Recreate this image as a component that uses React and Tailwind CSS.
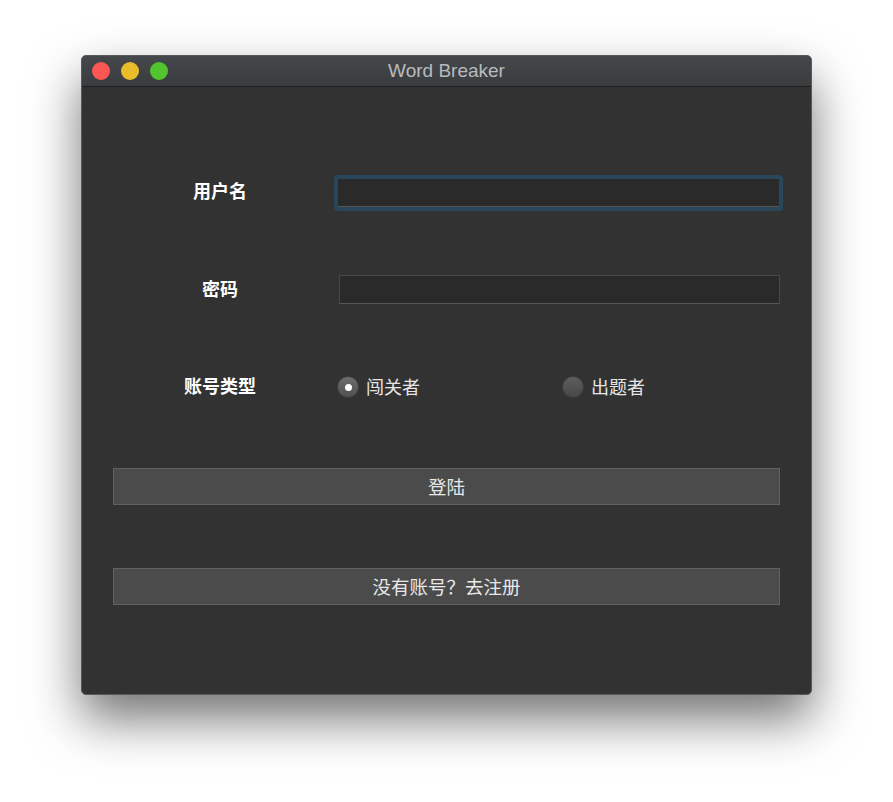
export default function App() {
  const cjk = { fontFamily: '"Noto Sans CJK SC", "Liberation Sans", sans-serif' }

  return (
    <div className="w-[893px] h-[802px] bg-white pt-[55px] pl-[81px]" style={cjk}>
      <div className="w-[731px] h-[640px] rounded-[5px] bg-[#323232] border border-[#5a5a5a] shadow-[0_24px_50px_rgba(0,0,0,0.55)] flex flex-col overflow-hidden">
        {/* title bar */}
        <div className="h-[31px] shrink-0 flex items-center relative bg-gradient-to-b from-[#45484b] to-[#3a3c3e] border-b border-[#1e1f20]">
          <div className="flex items-center gap-[11px] pl-[10px]">
            <span className="w-[18px] h-[18px] rounded-full bg-[#fc5753]" />
            <span className="w-[18px] h-[18px] rounded-full bg-[#e9bd2a]" />
            <span className="w-[18px] h-[18px] rounded-full bg-[#52c42d]" />
          </div>
          <div className="absolute inset-0 flex items-center justify-center text-[19px] text-[#b8bbbe]" style={{ fontFamily: '"Liberation Sans", sans-serif' }}>
            Word Breaker
          </div>
        </div>

        {/* body */}
        <div className="flex-1 px-[31px] pt-[89px] flex flex-col">
          <div className="flex items-center h-[34px]">
            <div className="w-[214px] text-center text-[18px] font-bold text-white -mt-[5px]">用户名</div>
            <div className="ml-[7px] flex-1 rounded-[4px] p-[4px] bg-[#29465a] -mr-[3px]">
              <div className="h-[28px] bg-[#2a2a2a] border-b border-[#555]" />
            </div>
          </div>

          <div className="flex items-center h-[30px] mt-[64px]">
            <div className="w-[214px] text-center text-[18px] font-bold text-white -mt-[2px]">密码</div>
            <div className="ml-[12px] flex-1 h-[29px] bg-[#2a2a2a] border border-[#484848] border-b-[#565656]" />
          </div>

          <div className="flex items-center h-[30px] mt-[68px]">
            <div className="w-[214px] text-center text-[18px] font-bold text-white -mt-[3px]">账号类型</div>
            <div className="ml-[10px] w-[225px] flex items-center gap-[7px]">
              <span className="w-[22px] h-[22px] rounded-full bg-gradient-to-b from-[#6e6e6e] to-[#505050] border border-[#3e3e3e] flex items-center justify-center">
                <span className="w-[7px] h-[7px] rounded-full bg-white" />
              </span>
              <span className="text-[18px] text-[#e6e6e6] -mt-[2px]">闯关者</span>
            </div>
            <div className="flex items-center gap-[7px]">
              <span className="w-[22px] h-[22px] rounded-full bg-gradient-to-b from-[#5e5e5e] to-[#484848] border border-[#3e3e3e]" />
              <span className="text-[18px] text-[#e6e6e6] -mt-[2px]">出题者</span>
            </div>
          </div>

          <button className="mt-[66px] h-[37px] w-full bg-[#4b4b4b] border border-[#616161] text-[18.5px] text-[#e8e8e8]">
            登陆
          </button>

          <button className="mt-[63px] h-[37px] w-full bg-[#4b4b4b] border border-[#616161] text-[18.5px] text-[#e8e8e8]">
            没有账号？去注册
          </button>
        </div>
      </div>
    </div>
  )
}
